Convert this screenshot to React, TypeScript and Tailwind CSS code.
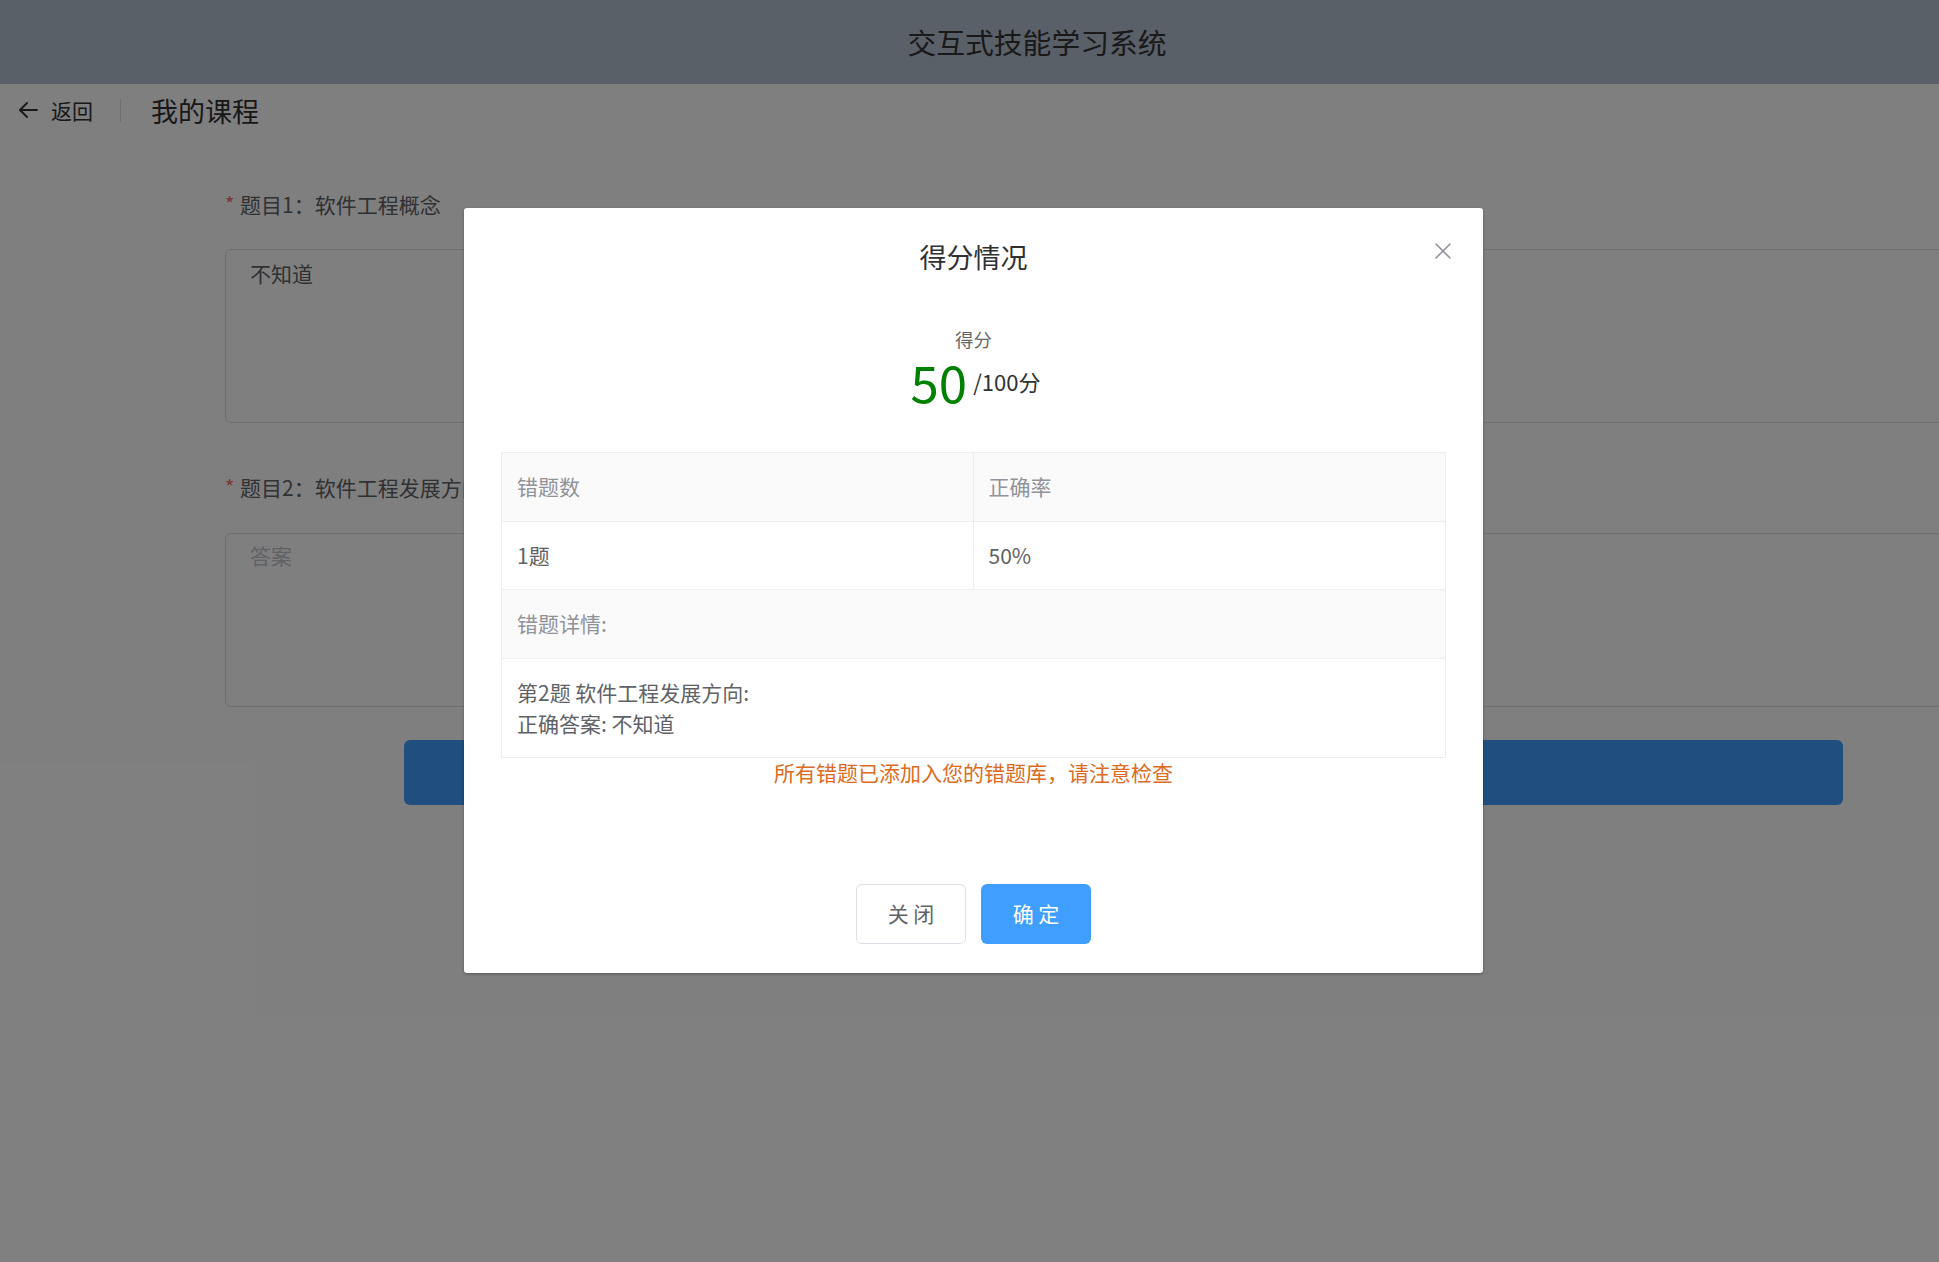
import React from "react";

const FONT = {
  fontFamily:
    '"Noto Sans CJK SC", "Noto Sans", "Liberation Sans", sans-serif',
};

function BackArrow() {
  return (
    <svg width="22" height="22" viewBox="0 0 22 22" fill="none" stroke="#303133" strokeWidth="1.9" strokeLinecap="round" strokeLinejoin="round">
      <path d="M20 11H3" />
      <path d="M10 4L3 11L10 18" />
    </svg>
  );
}

function CloseIcon() {
  return (
    <svg width="18" height="18" viewBox="0 0 18 18" fill="none" stroke="#909399" strokeWidth="1.6" strokeLinecap="round">
      <path d="M2 2L16 16" />
      <path d="M16 2L2 16" />
    </svg>
  );
}

export default function App() {
  return (
    <div className="relative w-full h-[1262px] overflow-hidden bg-white" style={FONT}>
      {/* Header */}
      <div className="h-[84px] bg-[#b4c0d0] flex items-center justify-center pl-[135px]">
        <span className="text-[28.8px] text-[#333333] leading-none">交互式技能学习系统</span>
      </div>

      {/* Page header */}
      <div className="h-[52px] flex items-center pl-[17px]">
        <BackArrow />
        <span className="ml-[12px] text-[21px] leading-none text-[#303133]">返回</span>
        <span className="ml-[27px] w-px h-[23px] bg-[#dcdfe6]" />
        <span className="ml-[30px] text-[27px] leading-none text-[#303133]">我的课程</span>
      </div>

      {/* Form */}
      <div className="ml-[225px] w-[1800px] pt-[53px]">
        <div className="flex items-center h-[30px] text-[21px] leading-none text-[#606266]">
          <span className="text-[#f56c6c] w-[15px] text-[20px]">*</span>
          <span>题目1：软件工程概念</span>
        </div>
        <div className="mt-[30px] h-[174px] border border-[#dcdfe6] rounded-[6px] px-[24px] pt-[8px] text-[21px] leading-[31px] text-[#606266]">
          不知道
        </div>
        <div className="mt-[49px] flex items-center h-[30px] text-[21px] leading-none text-[#606266]">
          <span className="text-[#f56c6c] w-[15px] text-[20px]">*</span>
          <span>题目2：软件工程发展方向</span>
        </div>
        <div className="mt-[31px] h-[174px] border border-[#dcdfe6] rounded-[6px] px-[24px] pt-[6px] text-[21px] leading-[31px] text-[#c0c4cc]">
          答案
        </div>
      </div>
      <div className="mt-[33px] ml-[404px] w-[1439px] h-[65px] rounded-[6px] bg-[#409eff]" />

      {/* Overlay */}
      <div className="absolute inset-0 bg-black/50" />

      {/* Dialog */}
      <div className="absolute left-[464px] top-[208px] w-[1019px] bg-white rounded-[3px] shadow-[0_1px_3px_rgba(0,0,0,0.3)]">
        <div className="relative pt-[30px] px-[30px]">
          <div className="h-[36px] flex items-center justify-center text-[27px] leading-none text-[#303133]">
            得分情况
          </div>
          <button className="absolute right-[31px] top-[34px] w-[18px] h-[18px] flex items-center justify-center">
            <CloseIcon />
          </button>
        </div>

        <div className="px-[37px]">
          <div className="mt-[52px] h-[27px] flex items-center justify-center text-[18.5px] leading-none text-[#666666]">
            得分
          </div>
          <div className="mt-0 h-[56px] flex items-center justify-center gap-[6px] pl-[4px]">
            <span className="text-[51px] leading-none text-[#008000]">50</span>
            <span className="text-[22px] leading-none text-[#303133]">/100分</span>
          </div>

          <div className="mt-[43px] border border-[#ebeef5] text-[21px] leading-[31.5px]">
            <div className="grid grid-cols-2 bg-[#fafafa] text-[#909399]">
              <div className="px-[15px] py-[18px] border-r border-[#ebeef5]">错题数</div>
              <div className="px-[15px] py-[18px]">正确率</div>
            </div>
            <div className="grid grid-cols-2 border-t border-[#ebeef5] text-[#606266]">
              <div className="px-[15px] py-[18px] border-r border-[#ebeef5]">1题</div>
              <div className="px-[15px] py-[18px]">50%</div>
            </div>
            <div className="border-t border-[#ebeef5] bg-[#fafafa] text-[#909399] px-[15px] py-[18px]">
              错题详情:
            </div>
            <div className="border-t border-[#ebeef5] text-[#606266] px-[15px] pt-[18px] pb-[17px]">
              <div>第2题 软件工程发展方向:</div>
              <div>正确答案: 不知道</div>
            </div>
          </div>

          <div className="text-center text-[21px] leading-[28px] text-[#dc6b1f]">
            所有错题已添加入您的错题库，请注意检查
          </div>
        </div>

        <div className="mt-[98px] pb-[29px] flex justify-center gap-[15px]">
          <button className="w-[110px] h-[60px] border border-[#dcdfe6] rounded-[6px] bg-white text-[21px] text-[#606266]">
            关 闭
          </button>
          <button className="w-[110px] h-[60px] rounded-[6px] bg-[#409eff] text-[21px] text-white">
            确 定
          </button>
        </div>
      </div>
    </div>
  );
}
